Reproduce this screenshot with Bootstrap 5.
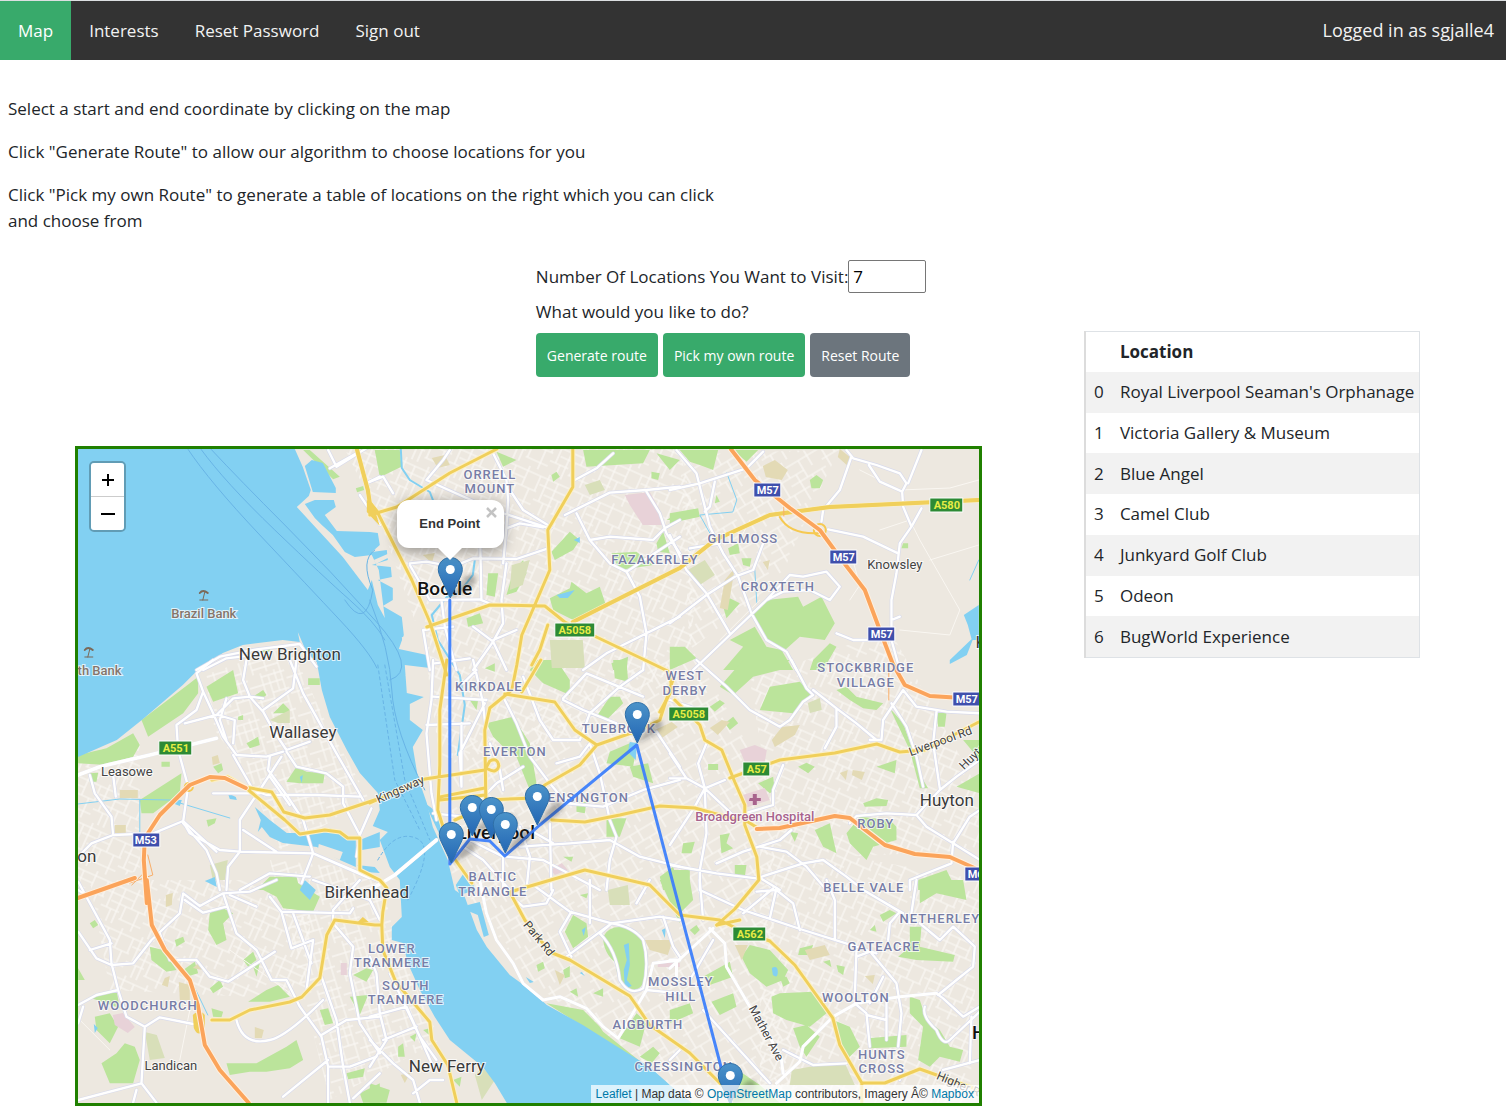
<!DOCTYPE html>
<html lang="en">
<head>
<meta charset="utf-8">
<meta name="viewport" content="width=device-width, initial-scale=1">
<title>Map</title>
<link href="https://cdn.jsdelivr.net/npm/bootstrap@5.3.0/dist/css/bootstrap.min.css" rel="stylesheet">
<style>
body{font-family:"Open Sans","Noto Sans",sans-serif;font-size:17px;line-height:26px;color:#212529;overflow-x:hidden}
.topnav{background:#333;border-top:1px solid #dcdfe1;line-height:27px}
.topnav a,.topnav .who{display:block;padding:16px 18px;color:#f2f2f2;text-decoration:none}
.topnav a.active{background:#38aa6b;color:#fff}
.topnav .who{padding-right:12px;font-size:18px}
.intro{width:50%;padding:36px 8px 0}
.intro p{margin-bottom:17px}
.planner{width:60.2%;margin-left:5%}
.controls{margin-left:50.8%;padding-top:9px;height:195px}
.controls .num{width:78px;height:33px;padding:1px 4px;border:1px solid #767676;border-radius:2px;color:#000}
.controls .ask{margin:6px 0}
.controls .btn{font-size:14px;height:44px;padding:0 10px;border-radius:4px;border:1px solid transparent;color:#fff;white-space:nowrap}
.btn-route{background:#38aa6b}
.btn-route:hover{background:#2f945c}
.mapbox{height:660px;border:3px solid #208000;overflow:hidden;font-family:"Liberation Sans",Arial,sans-serif;background:#ede8e0}
.mapbox>svg{width:100%;height:100%;display:block}
.zoomer{left:11px;top:12px;border:2px solid rgba(0,0,0,.25);border-radius:5px;background-clip:padding-box;overflow:hidden}
.zoomer button{display:block;width:33px;height:33px;border:0;background:#fff;padding:0}
.zoomer button+button{border-top:1px solid #ccc;height:34px}
.pop{left:319px;top:51px;width:107px;height:48px;border-radius:12px;background:#fff;box-shadow:0 3px 14px rgba(0,0,0,.4);font-size:13px;line-height:18px;color:#333;padding:15px 0 0 22px;font-weight:700}
.pop:after{content:"";position:absolute;left:41px;top:48px;border:12px solid transparent;border-top-color:#fff;border-bottom:0}
.pop button{right:6px;top:6px;width:13px;height:13px;border:0;background:none;padding:0;line-height:0}
.credit{right:0;bottom:0;background:rgba(255,255,255,.72);padding:0 5px;font-size:12px;line-height:18px;color:#333}
.credit a{color:#0078a8;text-decoration:none}
.places{width:336px;height:327px;margin:80px 0 0 102px;border:1px solid #dee2e6;border-left:2px solid #dcdcdc;line-height:24px}
.places th,.places td{padding:8px 4px 8px 8px;border:0;white-space:nowrap;vertical-align:middle}
.places td:first-child{width:27px;padding-right:0}
.places tbody tr:nth-child(odd) td{background:#f2f2f2;box-shadow:none}
.water{fill:#82d0f2}.park{fill:#bbe49b}.field{fill:#d8dfb9}.sand{fill:#e3dab5}.pink{fill:#e8d2d8}
.line{fill:none;stroke-linecap:round;stroke-linejoin:round}
.lbl text{text-anchor:middle;font-family:Roboto,sans-serif;paint-order:stroke;stroke:#fff;stroke-opacity:.75;stroke-width:2px}
.sub{font-size:13px;fill:#777da6;letter-spacing:1px;font-weight:500}
.town{font-size:17px;fill:#3a3a3a}.village{font-size:13px;fill:#444}.city{font-size:19px;fill:#111;font-weight:500}
.bank{font-size:13px;fill:#85756b;font-weight:500}.road{font-size:12px;fill:#444}
.shield text{font:700 11px Roboto,sans-serif;text-anchor:middle;fill:#fff}
.shield .a text{fill:#e7ec45}
</style>
<script src="https://cdn.jsdelivr.net/npm/bootstrap@5.3.0/dist/js/bootstrap.bundle.min.js"></script>
</head>
<body>
<nav class="topnav d-flex">
  <a class="active" href="#">Map</a><a href="#">Interests</a><a href="#">Reset Password</a><a href="#">Sign out</a>
  <span class="who ms-auto">Logged in as sgjalle4</span>
</nav>
<section class="intro">
  <p>Select a start and end coordinate by clicking on the map</p>
  <p>Click "Generate Route" to allow our algorithm to choose locations for you</p>
  <p>Click "Pick my own Route" to generate a table of locations on the right which you can click and choose from</p>
</section>
<main class="d-flex align-items-start">
  <div class="planner">
    <form class="controls" onsubmit="return false">
      <div class="d-flex align-items-center text-nowrap"><label for="n">Number Of Locations You Want to Visit:</label><input class="num" id="n" type="number" value="7"></div>
      <div class="ask">What would you like to do?</div>
      <div class="d-flex" style="gap:5px;padding-top:2px">
        <button class="btn btn-route" type="button">Generate route</button>
        <button class="btn btn-route" type="button">Pick my own route</button>
        <button class="btn btn-secondary" type="button">Reset Route</button>
      </div>
    </form>
    <div class="mapbox position-relative">
<svg viewBox="78 449 901 654" preserveAspectRatio="xMidYMid slice" role="img" aria-label="Map of Liverpool with the generated route">
<defs>
<pattern id="s1" width="46" height="42" patternUnits="userSpaceOnUse" patternTransform="rotate(24)"><path d="M0 5H46M0 13H30M8 21H46M0 29H20M22 35H46M6 0V29M17 5V42M30 0V21M38 21V42M44 5V21M24 21V35M11 29V42" fill="none" stroke="#fbf9f5" stroke-width="1.2"/></pattern>
<pattern id="s2" width="52" height="47" patternUnits="userSpaceOnUse" patternTransform="rotate(-31)"><path d="M0 7H52M0 18H31M12 26H52M0 35H28M28 41H52M5 7V35M15 0V18M22 18V47M31 7V26M41 0V18M47 26V41M36 26V47M10 35V47" fill="none" stroke="#fbf9f5" stroke-width="1.2"/></pattern>
<pattern id="s3" width="40" height="38" patternUnits="userSpaceOnUse" patternTransform="rotate(73)"><path d="M0 4H40M0 10H22M5 17H40M0 24H24M18 31H40M4 0V24M12 4V38M22 0V17M28 17V38M35 4V31" fill="none" stroke="#fbf9f5" stroke-width="1.2"/></pattern>
<linearGradient id="pg" x1="0" y1="0" x2="0" y2="1"><stop offset="0" stop-color="#4b93c9"/><stop offset="1" stop-color="#2366b4"/></linearGradient>
<filter id="blur"><feGaussianBlur stdDeviation="2"/></filter>
<symbol id="pin" viewBox="0 0 46 44" overflow="visible">
<path d="M13 40L27 20Q36 14 38 23Q38 31 13 41z" fill="#222" opacity=".3" filter="url(#blur)"/>
<path d="M12.500 .5C5.800 .5 .5 5.800 .5 12.500C.5 16 2 19 4 23L12.500 41L21 23C23 19 24.500 16 24.500 12.500C24.500 5.800 19.200 .5 12.500 .5z" fill="url(#pg)" stroke="#2e6fa8"/><circle cx="12.500" cy="12.500" r="4.500" fill="#fff"/></symbol>
<g id="white">
<g transform="translate(70 440) scale(.33333)"><path d="M380 690L450 650 560 628 690 612 740 680M400 690L470 655 600 640M775 30L800 80 930 0M780 85L860 40M870 165L930 255M890 130L930 110"/></g>
<g transform="translate(370 440) scale(.33333)"><path d="M0 125L40 110 70 160M370 40L410 120 415 180 410 260 400 370M170 120L370 210 540 265M170 120L220 60 240 30M420 150L460 210 545 262M410 265L450 250 520 262M120 370L170 365 250 380 310 355 440 357 535 325M615 120L680 85 730 40M585 225L720 158 830 150 930 140M620 220L660 300 720 370 770 395 930 290M660 300L720 290 850 300 885 265 930 240M830 155L870 220 890 280 930 340M120 375L180 480 330 478 370 495M330 250L335 480M410 370L395 480 400 550 370 605 310 690M310 560L370 605 410 690M370 600L440 570M215 480L225 560 260 690M160 570L250 560M180 690L160 570M770 395L810 470 830 580 820 690M930 530L830 580 710 640 640 690M195 670L300 655"/></g>
<g transform="translate(670 440) scale(.33333)"><path d="M0 150L90 130 230 85 280 35M20 30L80 100 100 180 120 260 160 340 205 410 245 520 290 600 350 635 380 690M135 125L120 200 105 215M60 325L150 310M0 285L50 390 110 460 180 580M0 550L110 465 195 410 250 390 280 310M70 690L180 585 290 480 340 455 420 450 480 480 510 440 470 395 400 410 360 405 290 480M545 50L510 150 460 210 455 245M530 30L550 55 620 75 690 100 710 130 697 155M597 75L630 125 697 155 700 200 725 260M755 30L715 130M755 205L725 260 690 310 680 400 665 480 665 600 690 690M475 268L580 290 685 340M665 540L690 530M500 580L550 600 640 600"/></g>
<g transform="translate(70 660) scale(.33333)"><path stroke-width="11" d="M25 345L90 320 240 285 440 235"/><path d="M430 0L380 40 400 95 380 150 320 195 325 270 355 380 340 485 360 520 450 570 510 575 730 580 930 665M400 95L430 160 460 230 500 285 590 290 640 275M345 190L440 165 490 115 540 110 580 115M530 0L520 60 540 110 580 155 610 210 650 270M580 150L670 85 680 0M660 0L700 100 750 190 800 280 880 420M650 270L720 245M650 275L680 320 770 340 820 380 820 430M635 290L570 390 510 480 510 575 475 620 470 690M490 285L550 390 590 405 740 405 870 410M600 290L595 330 650 405 700 480 730 580 695 670M600 350L660 435M520 510L620 575M60 345L75 400 125 470 130 525M25 590L65 550 130 525 250 520 340 483 440 575M340 490L410 570 440 640 450 690M130 345L138 410M730 580L900 655M510 690L600 640 720 650M905 445L870 525 860 590M430 400L570 400M25 690L40 700M445 165L495 180 490 250M470 115L450 180 470 240M820 430L870 525"/></g>
<g transform="translate(370 660) scale(.33333)"><path stroke-width="11" d="M200 540L75 645 0 690"/><path d="M190 0L185 120 170 220 185 400 200 480M310 0L340 130 350 240M280 70L320 30M190 110L350 120M170 195L300 190M275 190L275 380M345 130L270 280 275 380M400 110L440 190 480 290 540 370 590 430 700 440 820 390 930 360M400 390L390 330 360 250M380 370L460 320M460 50L510 180 550 240 630 240 660 160 750 80 820 30M580 115L650 40 820 110M580 120L640 150 740 190M660 250L690 340 720 480 740 530 720 600 710 690M560 310L630 290 660 250M450 560L600 550 720 540 810 590 930 620M540 490L545 690M480 510L550 550M450 500L480 590 470 690M400 590L400 690M410 590L520 600 690 690M280 560L340 600 420 690M300 540L400 590M230 410L330 420 380 370M190 460L280 470M860 215L930 320"/></g>
<g transform="translate(670 660) scale(.33333)"><path d="M80 0L170 80 240 150 330 200 360 180 400 125 430 105 410 85 365 0M430 90L500 145 560 190 620 240M500 145L500 200 465 265M700 90L640 180 635 240 600 240M700 90L740 140 830 155 930 160M665 130L710 200 740 290 760 380M800 155L790 250 810 385M930 300L860 350 810 390 740 465M740 465L650 460 560 468 540 490M740 465L770 500 850 550 930 600M850 545L845 610 720 660 720 690M850 550L900 470 930 450M0 355L50 355 105 385 165 360M0 280L50 355M105 385L190 465M105 385L75 440 0 555M110 250L85 310 105 385M105 390L110 520 90 630 90 690M340 315L310 390 310 435 225 460M0 615L140 640 260 655 400 610 460 600 530 650 580 690M140 610L220 575 330 540 365 510M270 560L350 575 410 620 470 690M265 650L330 690M0 120L90 150"/></g>
<g transform="translate(70 880) scale(.33333)"><path d="M25 5L120 180 125 250 145 330 170 410 225 440 270 412 370 432M25 155L80 235 125 255 190 250 245 180 330 100 340 40 390 78 460 40 540 35 620 0M345 60L400 98 470 80M60 210L125 190M25 375L80 345 145 330M25 430L40 380M225 440L215 610 260 668M215 610L25 660M200 630L190 668M270 160L300 240 380 240 420 290 475 305 615 215M460 40L500 160 560 210 605 300 650 300 690 380 755 470 775 560 775 668M480 45L560 80M600 50L635 95 840 100 850 85M635 95L665 205 730 180 710 330M670 100L725 250M870 0L790 90 790 130 850 200 840 280 870 430 930 520M755 290L800 420 820 560 840 668M755 465L830 420 930 410M500 420Q520 500 600 480Q650 470 760 360M775 540L640 650M780 560L840 560 920 530M850 655L930 580M730 0L900 60"/></g>
<g transform="translate(370 880) scale(.33333)"><path stroke-width="9" d="M330 0L350 100 380 180 430 250 460 310 520 360 570 350 650 385 700 440 745 475 830 330 850 250 930 240"/><path d="M490 15L600 95 725 130 870 110 930 120M605 95L570 155 605 230M590 230L725 130 690 160M690 160Q740 210 750 300Q780 350 820 325Q840 250 820 180Q790 140 725 130M660 0L660 130M840 0L800 70M880 110L910 200 930 230M830 330L930 340M400 30L460 80 530 70 550 30M0 60L30 120M0 230L20 280 30 400 50 480M0 410L110 380 150 470 190 560M60 280L150 470 200 540M50 480L0 560M0 480L70 550 130 600 150 668M40 480L140 440M130 640L180 600 220 600"/></g>
<g transform="translate(670 880) scale(.33333)"><path stroke-width="9" d="M120 145L165 190 170 260 240 380 290 450 335 540 340 580M320 610L390 545 400 500 490 410 560 370 690 350 800 340M0 265L60 210 130 145M0 240L20 240 20 300"/><path d="M90 0L100 120M90 30L220 90 400 150 560 200 620 220M320 25L300 115M260 35L320 30 370 70 390 150M220 100L310 25M470 0L495 60 495 180M590 35L690 95 660 130 655 180M740 0L720 130M580 30L700 100M605 220L680 310 695 400 685 500M560 210L555 350M560 230L600 215M555 370L590 400 600 500M650 355L650 480M590 405L650 420M640 290L600 370M750 130L810 180 850 140 915 200 910 260 860 300 805 345M800 340L820 355 880 410 930 380M765 380Q755 410 800 450Q820 500 840 480L930 395M340 510L430 555 530 550M100 390L200 500 300 610M0 540L30 510M905 410L900 550M820 570L930 540M700 570L690 600M130 180L60 300"/></g>
</g>
<g id="yellow">
<path d="M357 449L368 490 370 503 378 513 412 580 430 622 447 675M370 515L397 507 450 473 497 449M427 627L490 605 545 606 565 622 645 660 670 672 672 690 660 712M573 449L573 487 548 530 550 570 535 605 522 635 517 665 512 690 490 708 485 730 486 800M541 660L522 692M548 625L540 650 532 665M573 622L680 568 715 540 770 515 830 507 979 500"/>
<path d="M447 660L440 710 440 765 438 810 452 855 472 883M486 795L440 800M370 803L425 779 485 770 490 761Q498 757 499 766Q497 774 488 769M440 797L485 788M505 694L555 702 575 730 597 745 640 730 660 720 673 680M597 745L580 765 545 785 535 798 486 800M455 820L490 805M552 820L585 822 620 815 660 806 695 808 738 820M675 700L700 725 705 740 722 750 735 782 745 805 745 825 757 857 759 880 735 909 717 925M730 778L780 760 835 753 877 744 900 752 925 750 979 722M745 820L758 828"/>
<path d="M212 780L228 777 245 787 285 820 300 834 325 830 340 832 348 838 360 838 360 870 380 880M245 787L272 792 284 812 305 818 330 815 378 799M380 880L387 888 383 912 382 925 375 925 335 920 327 935 323 960 320 978 302 997 290 1002 250 1010 230 1020 212 1020M382 925L383 950 396 982 430 1022 432 1040 448 1065 457 1103M510 892L585 870 650 885 680 915 720 920 740 930 770 941 795 965 833 1018 840 1045 862 1083 862 1103M717 925L740 920M510 892L525 920 550 952 570 960 630 996 650 1025 690 1053 725 1088M862 1083L885 1083 920 1069 979 1090"/>
</g>
<g id="orange"><path d="M731 449L755 480 790 508 820 530 842 560 865 590 880 630 893 664 905 685 930 696 979 699M78 898L135 878M147 903L144 860 145 838 160 815 190 785 210 777 225 778 246 788M147 880L152 925 165 950 190 980 198 1005 205 1045 220 1070 249 1103M757 829L780 828 835 816 850 818 885 845 915 854 950 857 979 870"/></g>
</defs>
<path fill="#ede8e0" d="M78 449H979V1103H78z"/>
<path fill="url(#s1)" d="M345 449L680 449 700 540 690 660 560 740 440 760 425 650 380 520z"/>
<path fill="url(#s3)" d="M205 675L290 645 325 720 370 800 280 850 250 780 215 730zM270 860L380 870 395 940 440 1040 330 1100 305 1000z"/>
<path fill="url(#s2)" d="M455 745L690 645 780 800 770 900 800 1103 690 1103 530 980 450 870zM680 455L840 449 810 510 780 580 690 650z"/>
<path fill="url(#s1)" d="M750 680L890 630 979 790 979 850 780 860zM760 840L980 880 970 1103 760 1103zM90 880L310 880 310 1000 110 990zM78 755L140 740 140 870 78 890z"/>
<g class="park">
<g transform="translate(70 440) scale(.33333)"><path d="M720 30L810 110 790 118 700 30zM858 145L880 138 883 150 862 157zM915 30H930V80zM560 640L605 620 590 650z"/></g>
<g transform="translate(370 440) scale(.33333)"><path d="M15 30H90L95 80 30 112zM545 105L560 95 570 110 550 125zM860 40L930 60 900 90zM840 30H640L650 80 820 70zM545 335L600 275 630 300 610 330 555 360zM540 475L600 445 605 425 650 460 690 440 710 500 610 540 550 510zM355 400L385 400 375 470 350 465zM290 535L330 520 340 550 295 560zM860 310L880 275 900 340 865 335zM890 240L930 215V240zM725 340L800 335 850 375 750 390zM430 395L460 360 470 400 440 455 410 465zM845 95L870 100 865 120 845 115zM380 35L440 60 400 80zM725 670L775 650 770 690H730z"/></g>
<g transform="translate(670 440) scale(.33333)"><path d="M30 30L145 30 130 90 90 75 60 65zM190 30H265L230 65zM0 220L85 205 90 230 0 250zM420 120L440 105 460 120 450 145 425 145zM245 520L290 480 385 470 400 500 455 470 495 550 465 600 390 590 340 635 290 600zM180 600L255 560 290 620 335 630 370 690H160L220 620zM175 325L205 310 210 340 180 345zM215 355L245 355 240 380 220 375zM160 500L180 475 210 490 170 535zM0 620L45 620 80 655 0 690zM430 660L480 610 500 620 460 690H420zM140 165L150 185 135 190zM700 310H715V325H695z"/></g>
<g transform="translate(70 660) scale(.33333)"><path d="M215 180L360 70 385 50 385 100 340 160 235 230zM410 80L490 30 505 100 430 125zM25 285L110 265 190 220 210 255 190 290 110 315 25 310zM210 420L335 340 330 400 250 460 215 460zM530 250L565 230 570 255 540 265zM610 160L640 130 660 150 650 160zM650 365L680 320 710 335 765 340 760 370 690 370zM550 110L580 90 590 105 570 120zM715 55H750V75H715zM410 480L440 475 435 490 415 500zM570 680L600 650 680 650 690 690H560zM430 320L455 310 460 330 445 340zM505 170L520 165V180L505 180zM275 305L300 305V320H275zM60 340L85 338 80 365 60 365z"/></g>
<g transform="translate(370 660) scale(.33333)"><path d="M480 30L500 0 560 0 600 60 600 105 520 70zM680 170L720 110 750 110 760 130 710 180zM730 0H770L775 65 735 55zM710 310L720 275 780 250 800 260 790 320zM780 320L835 310 850 370 790 350zM710 475L770 475 750 530 710 530zM350 190L430 170 480 250 500 370 480 390 440 290 400 260 370 230zM300 120L325 120 320 150zM870 650L910 620 930 690H880zM620 430L650 425 645 460 620 455zM580 590L610 590 605 605zM345 25L375 10 375 35z"/></g>
<g transform="translate(670 660) scale(.33333)"><path d="M150 80L220 0 360 0 330 30 250 50 190 105zM270 150L300 80 390 65 425 100 370 160zM120 140L150 120 165 130 135 155zM165 190L190 170 205 190 180 210zM500 90L530 80 560 110 640 130 620 150 580 145 540 120zM660 145L700 190 760 360 775 385 750 385 720 270zM265 370L310 350 315 390 300 400zM115 312H145V330H115zM385 320L410 308 435 320 415 340zM620 320L680 300 675 340zM580 430L620 415 655 420 650 438 585 440zM530 520L570 470 660 480 680 500 680 540 610 560 590 600 540 550zM435 510L480 490 500 580 460 560zM360 515L385 520 375 545zM40 550L75 545 65 580H35zM150 525L180 520 170 550 190 565 155 580zM195 615L230 615 225 650H195zM0 630L60 630 60 690H0zM745 660L830 630 860 690H745zM800 155L830 160 825 200 805 200zM880 240L930 240V300zM860 380L930 340V400z"/></g>
<g transform="translate(70 880) scale(.33333)"><path d="M570 25L600 0H670L750 50 730 95 640 85 620 50zM420 100L450 80 490 100 460 130 470 180 440 195 415 150zM240 200L280 210 320 270 290 275 245 240zM65 355L140 330 150 385 110 370zM75 410L120 400 145 440 120 490 80 450zM95 550L140 520 165 490 195 500 210 540 190 610 120 610zM470 550L560 550 650 500 680 480 700 540 660 565 590 575 540 575 480 585zM535 365L590 330 625 315 660 350 600 365zM420 325L450 300 460 320 430 340zM850 285L890 265 910 270 890 305zM840 350L895 345 870 405zM750 390L775 385 790 430 765 435zM830 580L885 565 880 590 835 598zM870 640L930 610V668H880zM315 180L340 170 345 185 320 200zM520 240L550 215 560 240 535 260zM340 270L375 245 385 280 350 290zM25 265L45 300H25zM425 385L460 395 455 412 430 410zM550 260L570 250 560 290zM60 130L75 120 85 135 70 145z"/></g>
<g transform="translate(370 880) scale(.33333)"><path d="M585 155L610 105 650 130 655 170 610 205zM700 170Q720 130 780 145Q850 190 830 290Q810 340 780 330Q730 280 740 250Q700 220 700 170zM530 370L640 390 690 440 700 455 900 615 720 490zM870 0H900L930 60V130zM750 475L800 400 830 425 810 500zM810 530L850 500 870 520 845 550zM500 255L520 245 525 265 505 275zM580 270L600 258 600 290 585 295zM600 335L620 325 625 350zM670 340L700 350 700 325zM630 45L655 40 650 55zM0 610L60 630 50 668H0zM120 470L140 460 135 485zM85 500L100 490 105 530 85 530zM160 450L180 445 185 470zM250 600L275 590 270 620z"/></g>
<g transform="translate(670 880) scale(.33333)"><path d="M0 0H60L70 60 20 110zM215 230L240 195 300 210 355 270 340 300 290 320 240 280zM60 150L80 135 90 150 75 165zM100 290L180 245 190 290 120 315zM125 365L190 340 200 380 150 405zM305 350L330 340 430 335 470 400 420 440 350 420 310 400zM370 445L410 435 450 470 410 530 390 500zM490 420L540 440 570 500 530 540zM750 0L880 0 890 60 800 40 750 70zM685 230L720 200 720 140 755 140 750 200 855 225 850 245 740 240zM720 350L750 360 770 420 810 450 840 500 880 510 870 545 810 530 780 560 745 540 760 440 720 400zM595 475L710 465 710 500 600 505zM390 205L430 195 420 225 385 225zM460 245L480 240 485 262zM500 255L525 260 520 285 505 275zM630 105L660 90 680 100 640 125zM0 390L60 370 70 400 0 430zM330 290L350 290 360 310 340 320zM190 560L270 615 330 668H190zM600 150L615 135 620 155z"/></g>
</g>
<g class="field"><path d="M550 640L583 640 585 668 552 668zM688 570L705 560 715 575 700 585zM585 485L600 480 605 490 590 495zM512 565L530 560 523 585 510 590zM270 720L290 710 290 723 278 723zM210 865L228 860 225 880 213 880zM145 1032L157 1035 165 1058 150 1060zM475 1075L482 1067 495 1080 482 1100zM608 890L628 885 630 905 610 905zM792 1070L820 1065 845 1063 855 1085 790 1085zM808 703L820 698 822 710 810 713z"/></g>
<g class="sand"><path d="M763 466L775 460 788 470 782 480 766 477zM840 449L850 457 848 466 838 457zM725 580L735 568 728 610 720 608zM763 562L770 560 768 570zM710 728L722 720 730 722 718 735zM772 740L782 727 800 725 795 735 775 747zM655 730L672 722 678 727 662 738zM853 770L865 772 862 780 852 775zM840 773L848 770 846 780zM120 790H138V798H120zM212 757L218 755 220 763 213 765zM166 895L173 893 172 905 166 907zM165 978L170 976 168 987 162 985zM255 1027L264 1030 262 1038 255 1038zM179 982L190 985 190 1000 180 1000zM193 968L200 962 202 970zM645 940H673L668 955 650 950zM735 945L748 945 742 960zM805 950L825 945 830 955 810 960zM865 976L875 975 873 984zM480 980H505L500 990 480 985zM555 970L565 975 560 985zM401 1075L411 1072 405 1083zM432 458L445 455 450 465 438 468zM423 555L435 553 432 563zM115 825H126V833H115z"/></g>
<g class="pink"><path d="M625 495L650 492 660 510 665 525 643 525 630 505zM740 750L755 745 767 750 765 762 745 762zM743 795L765 788 770 800 745 808zM113 1015L123 1013 135 1027 128 1033 115 1025zM551 870L562 863 568 870 555 875zM341 963H347V975H341zM658 963H680V967H658z"/></g>
<g class="water">
<path d="M78 449H295L303 467 311 490 309 496 297 507 343 557 368 590 372 580 378 605 385 618 379 570 372 555 355 557 345 552 333 535 322 525 315 518 305 504 315 500 334 500 336 507 325 515 337 531 370 532 378 533 380 545 372 552 387 550 388 560 372 565 391 567 392 577 378 580 393 588 393 600 383 606 402 617 404 635 399 649 427 655 430 668 405 665 407 693 424 697 410 704 410 720 423 730 413 747 418 777 427 803 433 827 448 860 455 890 465 897 477 930 487 947 510 975 528 988 547 1005 583 1025 610 1042 650 1067 670 1085 692 1103H507L495 1083 483 1067 450 1040 435 1017 420 990 408 963 403 943 392 940 392 927 402 917 400 880 390 867 380 840 388 832 373 826 380 810 378 793 360 773 347 750 330 717 322 690 317 662 307 653 298 632 300 642 283 640 243 645 223 653 197 671 183 685 142 720 117 740 78 757z"/>
<path d="M305 466L312 460 323 463 336 488 336 493 313 492zM255 807L270 820 287 833 310 833 330 828 347 837 356 838 356 867 340 860 317 847 283 843 270 837 262 827 258 832 261 820zM360 840L380 832V847L362 850zM357 865L375 867 380 873 365 872zM228 793L236 797 237 800 230 799zM174 800L182 800 180 806 175 804zM300 890L305 880 316 890 310 900zM580 973L585 976 582 972zM624 945L629 943 630 965 627 980 632 986 625 989 624 970 627 960zM772 968Q778 965 778 972T773 975zM964 615L979 605V640L972 640 968 625zM974 637L967 655 950 664 950 660zM557 595L575 590 568 598 560 598zM574 540L580 537 580 543zM582 930L586 927 584 936zM468 905L480 902 489 935 484 937 478 915 466 910zM425 803L437 812 446 835 440 835zM456 885L466 870 476 890 460 895zM662 930L666 928 665 938zM526 977L534 982 530 983zM94 1024L98 1028 95 1033zM300 777L303 775 302 783zM630 742L637 743 636 760 628 752zM205 881L215 877 217 887z"/>
</g>
<g class="line" stroke="#82d0f2" stroke-width="2"><path d="M401 449L402 468 410 480 430 492 437 510M475 560L473 575 460 592 447 597 432 615 438 640 460 675 465 705 458 755" /><path stroke-width="1" d="M727 473L737 500 733 512 700 515 710 533M755 570L757 603M690 550L720 540M78 804L120 799 170 800 230 818M140 800V838M195 988L208 1015M979 560L970 580"/></g>
<path fill="#ede8e0" d="M319 844L343 852 340 860 318 850zM404 620L430 622V632L405 627zM402 637L430 641V647L403 644zM374 560L390 553 392 556 376 564zM406 675L425 677V690L408 688z" />
<g class="line" stroke="#68b4e6" stroke-width="1"><path d="M188 449Q210 482 260 535T340 620T377 668M201 449Q225 482 275 530T350 600T385 640M211 449Q240 480 285 525T375 620T390 680M345 600Q366 632 373 590Q360 560 375 550M370 600Q390 650 392 690T425 790" /><path stroke-dasharray="3 3" d="M378 665L395 780 420 830M385 665L405 780 430 840M378 860Q395 830 416 838T408 900"/></g>
<g class="line" stroke="#faf7f2" stroke-width="1"><path d="M860 470L900 490 950 488 979 480M850 600L860 585 853 560M900 630L950 635 960 610 920 540 910 520 880 530M750 520L740 540M720 640L760 600M930 560L979 545M80 1020L110 1050M190 1010L180 1060M230 950L300 1000"/></g>
<use href="#white" class="line" stroke="#d9dbeb" stroke-width="11"/>
<use href="#white" class="line" stroke="#fff" stroke-width="7"/>
<use href="#yellow" class="line" stroke="#fbf0c8" stroke-width="5"/>
<use href="#yellow" class="line" stroke="#f0cf5b" stroke-width="3"/>
<path class="line" d="M573 622L680 568 715 540 770 515 830 507 979 500M357 449L368 490 370 503 378 513" stroke="#f0cf5b" stroke-width="4"/>
<path d="M367 500L373 504 380 526 367 512zM193 1015Q200 1008 205 1015V1030Q198 1038 194 1028zM358 922L363 917 369 922z" fill="#f0cf5b"/>
<g class="line" stroke="#f6c951" stroke-width="2"><circle cx="820" cy="530" r="6"/><circle cx="189" cy="787" r="4"/><path d="M780 517Q790 535 820 533"/></g>
<g class="line" stroke="#f9ae69" stroke-width="1"><path d="M784 500V516M889 670L889 700M148 855L153 875 130 883M147 870L132 885"/></g>
<use href="#orange" class="line" stroke="#fff0df" stroke-width="6"/>
<use href="#orange" class="line" stroke="#fba45b" stroke-width="4"/>
<path d="M750 798h3v-4h4v4h4v3h-4v4h-4v-4h-4z" fill="#a8638d"/>
<g class="line" stroke="#7b6958" stroke-width="1"><path stroke-width="2" d="M200 593Q203 589 208 593M85 650Q88 646 93 650"/><path d="M205 592L203 600M90 649L88 657M200 600H208M85 657H93"/></g>
<g class="lbl">
<g class="sub"><text x="490" y="479">ORRELL</text><text x="490" y="493">MOUNT</text><text x="655" y="564">FAZAKERLEY</text><text x="743" y="543">GILLMOSS</text><text x="778" y="591">CROXTETH</text><text x="866" y="672">STOCKBRIDGE</text><text x="866" y="687">VILLAGE</text><text x="489" y="691">KIRKDALE</text><text x="685" y="680">WEST</text><text x="685" y="695">DERBY</text><text x="619" y="733">TUEBROOK</text><text x="515" y="756">EVERTON</text><text x="584" y="802">KENSINGTON</text><text x="876" y="828">ROBY</text><text x="493" y="881">BALTIC</text><text x="493" y="896">TRIANGLE</text><text x="864" y="892">BELLE VALE</text><text x="940" y="923">NETHERLEY</text><text x="884" y="951">GATEACRE</text><text x="392" y="953">LOWER</text><text x="392" y="967">TRANMERE</text><text x="406" y="990">SOUTH</text><text x="406" y="1004">TRANMERE</text><text x="681" y="986">MOSSLEY</text><text x="681" y="1001">HILL</text><text x="856" y="1002">WOOLTON</text><text x="148" y="1010">WOODCHURCH</text><text x="648" y="1029">AIGBURTH</text><text x="684" y="1071">CRESSINGTON</text><text x="882" y="1059">HUNTS</text><text x="882" y="1073">CROSS</text></g>
<g class="town"><text x="290" y="660">New Brighton</text><text x="303" y="738">Wallasey</text><text x="367" y="898">Birkenhead</text><text x="447" y="1072">New Ferry</text><text x="947" y="806">Huyton</text><text x="87" y="862">on</text></g>
<g class="village"><text x="895" y="569">Knowsley</text><text x="127" y="776">Leasowe</text><text x="171" y="1070">Landican</text></g>
<g class="city"><text x="445" y="595">Bootle</text><text x="496" y="839">Liverpool</text><text x="979" y="1039">H</text></g>
<g class="town"><text x="981" y="648">K</text></g>
<g class="bank"><text x="204" y="618">Brazil Bank</text><text x="89" y="675">North Bank</text><text x="755" y="821" style="fill:#a8638d">Broadgreen Hospital</text></g>
<g class="road"><text transform="translate(402 793) rotate(-24)">Kingsway</text><text transform="translate(942 745) rotate(-20)">Liverpool Rd</text><text transform="translate(978 757) rotate(-44)">Huyton</text><text transform="translate(536 941) rotate(51)">Park Rd</text><text transform="translate(763 1035) rotate(62)">Mather Ave</text><text transform="translate(960 1089) rotate(23)">Higher Rd</text></g>
</g>
<g class="shield">
<g fill="#3f4fac" stroke="#fff"><path d="M754 483h27v14h-27zM830 550h27v14h-27zM868 627h27v14h-27zM953 692h27v14h-27zM133 833h27v14h-27zM965 867h27v14h-27z"/></g>
<g><text x="768" y="494">M57</text><text x="844" y="561">M57</text><text x="882" y="638">M57</text><text x="967" y="703">M57</text><text x="146" y="844">M53</text><text x="979" y="878">M62</text></g>
<g fill="#2d8a35" stroke="#fff"><path d="M930 498h33v14h-33zM555 623h40v14h-40zM669 707h40v14h-40zM159 741h33v14h-33zM743 762h27v14h-27zM733 927h33v14h-33z"/></g>
<g class="a"><text x="947" y="509">A580</text><text x="575" y="634">A5058</text><text x="689" y="718">A5058</text><text x="176" y="752">A551</text><text x="757" y="773">A57</text><text x="750" y="938">A562</text></g>
</g>
<path class="line" stroke="#3d80fb" stroke-width="3" stroke-opacity=".95" d="M450 600V864L470 839 490 841 505 856 540 825 637 745 722 1070 731 1104"/>
<use href="#pin" x="438" y="557" width="46" height="44"/><use href="#pin" x="625" y="702" width="46" height="44"/><use href="#pin" x="525" y="784" width="46" height="44"/><use href="#pin" x="460" y="795" width="46" height="44"/><use href="#pin" x="479" y="797" width="46" height="44"/><use href="#pin" x="493" y="812" width="46" height="44"/><use href="#pin" x="439" y="822" width="46" height="44"/><use href="#pin" x="718" y="1063" width="46" height="44"/>
</svg>
      <div class="zoomer position-absolute"><button type="button" aria-label="Zoom in"><svg width="14" height="14"><path d="M7 1V13M1 7H13" stroke="#000" stroke-width="2"/></svg></button><button type="button" aria-label="Zoom out"><svg width="14" height="14"><path d="M0 7H14" stroke="#000" stroke-width="2"/></svg></button></div>
      <div class="pop position-absolute">End Point<button class="position-absolute" type="button" aria-label="Close"><svg width="13" height="13"><path d="M2 2L11 11M11 2L2 11" stroke="#c3c3c3" stroke-width="2.500"/></svg></button></div>
      <div class="credit position-absolute text-nowrap"><a href="#">Leaflet</a> | Map data © <a href="#">OpenStreetMap</a> contributors, Imagery Â© <a href="#">Mapbox</a></div>
    </div>
  </div>
  <table class="table places">
    <thead><tr><th></th><th>Location</th></tr></thead>
    <tbody>
      <tr><td>0</td><td>Royal Liverpool Seaman's Orphanage</td></tr>
      <tr><td>1</td><td>Victoria Gallery &amp; Museum</td></tr>
      <tr><td>2</td><td>Blue Angel</td></tr>
      <tr><td>3</td><td>Camel Club</td></tr>
      <tr><td>4</td><td>Junkyard Golf Club</td></tr>
      <tr><td>5</td><td>Odeon</td></tr>
      <tr><td>6</td><td>BugWorld Experience</td></tr>
    </tbody>
  </table>
</main>
</body>
</html>
